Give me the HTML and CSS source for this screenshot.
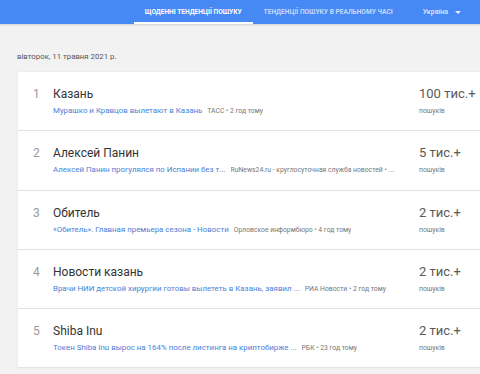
FILE: index.html
```html
<!DOCTYPE html>
<html lang="uk">
<head>
<meta charset="utf-8">
<link rel="stylesheet" href="styles.css">
</head>
<body>
<header class="topbar">
  <nav class="tabs">
    <a class="tab active">Щоденні тенденції пошуку</a>
    <a class="tab">Тенденції пошуку в реальному часі</a>
  </nav>
  <div class="country">Україна <span class="caret"></span></div>
</header>
<main class="main">
  <div class="date">вівторок, 11 травня 2021 р.</div>
  <ul class="list">
    <li class="row">
      <div class="num">1</div>
      <div class="body">
        <div class="title">Казань</div>
        <div class="meta"><span class="link">Мурашко и Кравцов вылетают в Казань</span><span class="src">ТАСС • 2 год тому</span></div>
      </div>
      <div class="stat"><div class="count">100 тис.+</div><div class="unit">пошуків</div></div>
    </li>
    <li class="row">
      <div class="num">2</div>
      <div class="body">
        <div class="title">Алексей Панин</div>
        <div class="meta"><span class="link">Алексей Панин прогулялся по Испании без т...</span><span class="src">RuNews24.ru - круглосуточная служба новостей • ...</span></div>
      </div>
      <div class="stat"><div class="count">5 тис.+</div><div class="unit">пошуків</div></div>
    </li>
    <li class="row">
      <div class="num">3</div>
      <div class="body">
        <div class="title">Обитель</div>
        <div class="meta"><span class="link">«Обитель». Главная премьера сезона - Новости</span><span class="src">Орловское информбюро • 4 год тому</span></div>
      </div>
      <div class="stat"><div class="count">2 тис.+</div><div class="unit">пошуків</div></div>
    </li>
    <li class="row">
      <div class="num">4</div>
      <div class="body">
        <div class="title">Новости казань</div>
        <div class="meta"><span class="link">Врачи НИИ детской хирургии готовы вылететь в Казань, заявил ...</span><span class="src">РИА Новости • 2 год тому</span></div>
      </div>
      <div class="stat"><div class="count">2 тис.+</div><div class="unit">пошуків</div></div>
    </li>
    <li class="row">
      <div class="num">5</div>
      <div class="body">
        <div class="title">Shiba Inu</div>
        <div class="meta"><span class="link">Токен Shiba Inu вырос на 164% после листинга на криптобирже ...</span><span class="src">РБК • 23 год тому</span></div>
      </div>
      <div class="stat"><div class="count">2 тис.+</div><div class="unit">пошуків</div></div>
    </li>
  </ul>
</main>
</body>
</html>
```
FILE: styles.css
```css
* { box-sizing: border-box; }
html, body { margin: 0; padding: 0; }
body {
  background: #f2f2f2;
  font-family: Roboto, "Noto Sans", Arial, sans-serif;
  color: #333;
  width: 480px;
  height: 374px;
  overflow: hidden;
}
.topbar {
  height: 24px;
  background: #4688f4;
  display: flex;
  align-items: stretch;
  justify-content: flex-end;
  padding-right: 19px;
  box-shadow: 0 1px 2px rgba(0,0,0,0.15);
}
.tabs {
  display: flex;
  align-items: stretch;
}
.tab {
  display: flex;
  align-items: center;
  padding: 2px 11px 0;
  font-size: 6.6px;
  font-weight: 700;
  text-transform: uppercase;
  color: rgba(255,255,255,0.7);
  border-bottom: 2px solid transparent;
}
.tab.active {
  color: #fff;
  border-bottom-color: #fff;
}
.tab + .tab { margin-left: 0; }
.country {
  display: flex;
  align-items: center;
  margin-left: 19px;
  font-size: 7px;
  font-weight: 500;
  color: rgba(255,255,255,0.85);
  gap: 7px;
}
.caret {
  width: 0; height: 0;
  border-left: 3px solid transparent;
  border-right: 3px solid transparent;
  border-top: 3.5px solid rgba(255,255,255,0.85);
}
.main {
  padding: 0 0 0 17px;
}
.date {
  font-size: 7.8px;
  color: #555;
  padding-top: 28px;
  height: 48px;
}
.list {
  list-style: none;
  margin: 0 -20px 0 1px;
  padding: 0;
  background: #fff;
  box-shadow: 0 0 1px rgba(0,0,0,0.12);
}
.row {
  display: flex;
  height: 59.3px;
  border-bottom: 1px solid #e3e3e3;
  padding-top: 15px;
}
.num {
  width: 35px;
  padding-left: 15px;
  font-size: 12px;
  color: #999;
  line-height: 14px;
}
.body {
  width: 366px;
  min-width: 0;
}
.title {
  font-size: 12px;
  line-height: 14px;
  color: #333;
}
.meta {
  display: flex;
  align-items: baseline;
  margin-top: 5px;
  white-space: nowrap;
  overflow: hidden;
}
.link {
  font-size: 7.9px;
  color: #4a80d6;
  margin-right: 5px;
}
.src {
  font-size: 6.8px;
  color: #777;
  overflow: hidden;
  text-overflow: clip;
}
.count {
  font-size: 13px;
  line-height: 14px;
  color: #5a5a5a;
}
.unit {
  font-size: 6.8px;
  color: #777;
  margin-top: 6px;
}
```
